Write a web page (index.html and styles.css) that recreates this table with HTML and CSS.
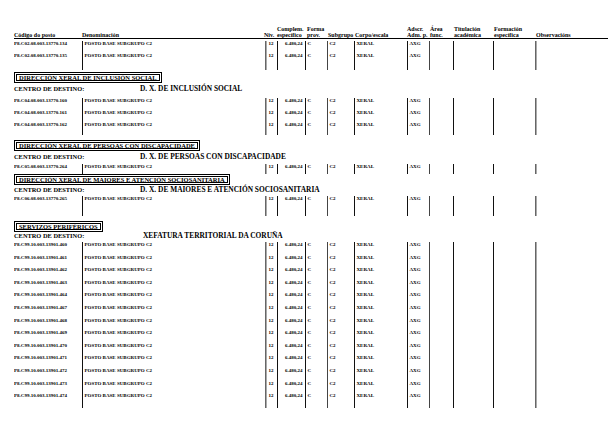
FILE: index.html
```html
<!DOCTYPE html>
<html lang="gl">
<head>
<meta charset="utf-8">
<title>Relación de postos</title>
<link rel="stylesheet" href="styles.css">
</head>
<body>
<div class="page">
  <div class="head">
    <div class="h h-code">Código do posto</div>
    <div class="h h-den">Denominación</div>
    <div class="h h-niv">Niv.</div>
    <div class="h h-comp">Complem.<br>específico</div>
    <div class="h h-forma">Forma<br>prov.</div>
    <div class="h">Subgrupo</div>
    <div class="h">Corpo/escala</div>
    <div class="h h-ads">Adscr.<br>Adm. p.</div>
    <div class="h">Área<br>func.</div>
    <div class="h">Titulación<br>académica</div>
    <div class="h">Formación<br>específica</div>
    <div class="h">Observacións</div>
  </div>

  <table class="rows mt2">
    <colgroup><col class="c1"><col class="c2"><col class="c3"><col class="c4"><col class="c5"><col class="c6"><col class="c7"><col class="c8"><col class="c9"><col class="c10"><col class="c11"><col class="c12"></colgroup>
    <tr><td>P8.C02.08.003.13770.134</td><td>POSTO BASE SUBGRUPO C2</td><td class="n">12</td><td class="r">6.480,24</td><td>C</td><td>C2</td><td>XERAL</td><td>AXG</td><td></td><td></td><td></td><td></td></tr>
    <tr><td>P8.C02.08.003.13770.135</td><td>POSTO BASE SUBGRUPO C2</td><td class="n">12</td><td class="r">6.480,24</td><td>C</td><td>C2</td><td>XERAL</td><td>AXG</td><td></td><td></td><td></td><td></td></tr>
    <tr class="tail t5"><td></td><td></td><td></td><td></td><td></td><td></td><td></td><td></td><td></td><td></td><td></td><td></td></tr>
  </table>

  <div class="sec s2"><span class="box">DIRECCIÓN XERAL DE INCLUSIÓN SOCIAL</span></div>
  <div class="centro m2"><span class="cl">CENTRO DE DESTINO:</span><span class="cn">D. X. DE INCLUSIÓN SOCIAL</span></div>
  <table class="rows mt5">
    <colgroup><col class="c1"><col class="c2"><col class="c3"><col class="c4"><col class="c5"><col class="c6"><col class="c7"><col class="c8"><col class="c9"><col class="c10"><col class="c11"><col class="c12"></colgroup>
    <tr><td>P8.C04.08.003.13770.160</td><td>POSTO BASE SUBGRUPO C2</td><td class="n">12</td><td class="r">6.480,24</td><td>C</td><td>C2</td><td>XERAL</td><td>AXG</td><td></td><td></td><td></td><td></td></tr>
    <tr><td>P8.C04.08.003.13770.161</td><td>POSTO BASE SUBGRUPO C2</td><td class="n">12</td><td class="r">6.480,24</td><td>C</td><td>C2</td><td>XERAL</td><td>AXG</td><td></td><td></td><td></td><td></td></tr>
    <tr><td>P8.C04.08.003.13770.162</td><td>POSTO BASE SUBGRUPO C2</td><td class="n">12</td><td class="r">6.480,24</td><td>C</td><td>C2</td><td>XERAL</td><td>AXG</td><td></td><td></td><td></td><td></td></tr>
    <tr class="tail t1"><td></td><td></td><td></td><td></td><td></td><td></td><td></td><td></td><td></td><td></td><td></td><td></td></tr>
  </table>

  <div class="sec s5"><span class="box">DIRECCIÓN XERAL DE PERSOAS CON DISCAPACIDADE</span></div>
  <div class="centro m2"><span class="cl">CENTRO DE DESTINO:</span><span class="cn">D. X. DE PERSOAS CON DISCAPACIDADE</span></div>
  <table class="rows mt3 short">
    <colgroup><col class="c1"><col class="c2"><col class="c3"><col class="c4"><col class="c5"><col class="c6"><col class="c7"><col class="c8"><col class="c9"><col class="c10"><col class="c11"><col class="c12"></colgroup>
    <tr><td>P8.C05.08.003.13770.264</td><td>POSTO BASE SUBGRUPO C2</td><td class="n">12</td><td class="r">6.480,24</td><td>C</td><td>C2</td><td>XERAL</td><td>AXG</td><td></td><td></td><td></td><td></td></tr>
  </table>

  <div class="sec s0"><span class="box">DIRECCIÓN XERAL DE MAIORES E ATENCIÓN SOCIOSANITARIA</span></div>
  <div class="centro m1"><span class="cl">CENTRO DE DESTINO:</span><span class="cn">D. X. DE MAIORES E ATENCIÓN SOCIOSANITARIA</span></div>
  <table class="rows mt2">
    <colgroup><col class="c1"><col class="c2"><col class="c3"><col class="c4"><col class="c5"><col class="c6"><col class="c7"><col class="c8"><col class="c9"><col class="c10"><col class="c11"><col class="c12"></colgroup>
    <tr><td>P8.C06.08.003.13770.265</td><td>POSTO BASE SUBGRUPO C2</td><td class="n">12</td><td class="r">6.480,24</td><td>C</td><td>C2</td><td>XERAL</td><td>AXG</td><td></td><td></td><td></td><td></td></tr>
    <tr class="tail t8"><td></td><td></td><td></td><td></td><td></td><td></td><td></td><td></td><td></td><td></td><td></td><td></td></tr>
  </table>

  <div class="sec s5"><span class="box">SERVIZOS PERIFÉRICOS</span></div>
  <div class="centro m0"><span class="cl">CENTRO DE DESTINO:</span><span class="cn cn-x">XEFATURA TERRITORIAL DA CORUÑA</span></div>
  <table class="rows mt2 wide">
    <colgroup><col class="c1"><col class="c2"><col class="c3"><col class="c4"><col class="c5"><col class="c6"><col class="c7"><col class="c8"><col class="c9"><col class="c10"><col class="c11"><col class="c12"></colgroup>
    <tr><td>P8.C99.10.003.13901.460</td><td>POSTO BASE SUBGRUPO C2</td><td class="n">12</td><td class="r">6.480,24</td><td>C</td><td>C2</td><td>XERAL</td><td>AXG</td><td></td><td></td><td></td><td></td></tr>
    <tr><td>P8.C99.10.003.13901.461</td><td>POSTO BASE SUBGRUPO C2</td><td class="n">12</td><td class="r">6.480,24</td><td>C</td><td>C2</td><td>XERAL</td><td>AXG</td><td></td><td></td><td></td><td></td></tr>
    <tr><td>P8.C99.10.003.13901.462</td><td>POSTO BASE SUBGRUPO C2</td><td class="n">12</td><td class="r">6.480,24</td><td>C</td><td>C2</td><td>XERAL</td><td>AXG</td><td></td><td></td><td></td><td></td></tr>
    <tr><td>P8.C99.10.003.13901.463</td><td>POSTO BASE SUBGRUPO C2</td><td class="n">12</td><td class="r">6.480,24</td><td>C</td><td>C2</td><td>XERAL</td><td>AXG</td><td></td><td></td><td></td><td></td></tr>
    <tr><td>P8.C99.10.003.13901.464</td><td>POSTO BASE SUBGRUPO C2</td><td class="n">12</td><td class="r">6.480,24</td><td>C</td><td>C2</td><td>XERAL</td><td>AXG</td><td></td><td></td><td></td><td></td></tr>
    <tr><td>P8.C99.10.003.13901.467</td><td>POSTO BASE SUBGRUPO C2</td><td class="n">12</td><td class="r">6.480,24</td><td>C</td><td>C2</td><td>XERAL</td><td>AXG</td><td></td><td></td><td></td><td></td></tr>
    <tr><td>P8.C99.10.003.13901.468</td><td>POSTO BASE SUBGRUPO C2</td><td class="n">12</td><td class="r">6.480,24</td><td>C</td><td>C2</td><td>XERAL</td><td>AXG</td><td></td><td></td><td></td><td></td></tr>
    <tr><td>P8.C99.10.003.13901.469</td><td>POSTO BASE SUBGRUPO C2</td><td class="n">12</td><td class="r">6.480,24</td><td>C</td><td>C2</td><td>XERAL</td><td>AXG</td><td></td><td></td><td></td><td></td></tr>
    <tr><td>P8.C99.10.003.13901.470</td><td>POSTO BASE SUBGRUPO C2</td><td class="n">12</td><td class="r">6.480,24</td><td>C</td><td>C2</td><td>XERAL</td><td>AXG</td><td></td><td></td><td></td><td></td></tr>
    <tr><td>P8.C99.10.003.13901.471</td><td>POSTO BASE SUBGRUPO C2</td><td class="n">12</td><td class="r">6.480,24</td><td>C</td><td>C2</td><td>XERAL</td><td>AXG</td><td></td><td></td><td></td><td></td></tr>
    <tr><td>P8.C99.10.003.13901.472</td><td>POSTO BASE SUBGRUPO C2</td><td class="n">12</td><td class="r">6.480,24</td><td>C</td><td>C2</td><td>XERAL</td><td>AXG</td><td></td><td></td><td></td><td></td></tr>
    <tr><td>P8.C99.10.003.13901.473</td><td>POSTO BASE SUBGRUPO C2</td><td class="n">12</td><td class="r">6.480,24</td><td>C</td><td>C2</td><td>XERAL</td><td>AXG</td><td></td><td></td><td></td><td></td></tr>
    <tr><td>P8.C99.10.003.13901.474</td><td>POSTO BASE SUBGRUPO C2</td><td class="n">12</td><td class="r">6.480,24</td><td>C</td><td>C2</td><td>XERAL</td><td>AXG</td><td></td><td></td><td></td><td></td></tr>
    <tr class="tail t2"><td></td><td></td><td></td><td></td><td></td><td></td><td></td><td></td><td></td><td></td><td></td><td></td></tr>
  </table>
</div>
</body>
</html>
```
FILE: styles.css
```css
html, body {
  margin: 0;
  padding: 0;
  background: #fff;
}
body {
  font-family: "Liberation Serif", "Times New Roman", serif;
  font-weight: bold;
  color: #000;
}
.page {
  padding: 27px 7px 0 14px;
}
.head {
  display: grid;
  grid-template-columns: 68px 182px 13px 29px 22px 27px 52px 23px 24px 40px 42px 72px;
  align-items: end;
  height: 11px;
  border-bottom: 1px solid #000;
  font-size: 6px;
  line-height: 5.5px;
  white-space: nowrap;
}
.h-forma { padding-left: 1px; }

/* data tables */
.rows {
  border-collapse: collapse;
  border-spacing: 0;
  table-layout: fixed;
  width: 586px;
  font-size: 5px;
  line-height: 6px;
}
.rows.mt2 { margin-top: 2px; }
.rows.mt3 { margin-top: 3px; }
.rows.mt5 { margin-top: 5px; }
.c1 { width: 68px; }
.c2 { width: 183px; }
.c3 { width: 12px; }
.c4 { width: 28px; }
.c5 { width: 22px; }
.c6 { width: 27px; }
.c7 { width: 53px; }
.c8 { width: 22px; }
.c9 { width: 24px; }
.c10 { width: 40px; }
.c11 { width: 42px; }
.c12 { width: 65px; }
.rows td {
  height: 12px;
  padding: 0 0 0 2px;
  vertical-align: top;
  white-space: nowrap;
  overflow: hidden;
  border-left: 1px solid #111;
  box-sizing: border-box;
}
.rows td:first-child {
  border-left: none;
  padding-left: 0;
}
.rows td:nth-child(3),
.rows td:nth-child(12) {
  border-left: 1px solid #666;
  box-shadow: inset 1px 0 0 #aaa;
}
.rows td:nth-child(6),
.rows td:nth-child(9) {
  border-left-color: #444;
}
.rows td.n {
  text-align: center;
  padding-left: 0;
}
.rows td.r {
  text-align: right;
  padding-right: 2px;
}
.rows.short td { height: 10px; }
.rows.wide td { height: 12.6px; }
.rows tr.tail.t1 td { height: 1px; }
.rows tr.tail.t2 td { height: 2px; }
.rows tr.tail.t5 td { height: 5px; }
.rows tr.tail.t8 td { height: 8px; }

/* section boxes */
.sec {
  display: flex;
  height: 11px;
}
.sec.s0 { margin-top: 0; }
.sec.s2 { margin-top: 2px; }
.sec.s5 { margin-top: 5px; }
.box {
  display: block;
  box-sizing: border-box;
  height: 11px;
  border: 3px double #000;
  padding: 0 2px;
  font-size: 6.5px;
  line-height: 5px;
  white-space: nowrap;
}

/* centro de destino */
.centro {
  display: flex;
  align-items: center;
  height: 8px;
  white-space: nowrap;
}
.centro.m0 { margin-top: 0; }
.centro.m1 { margin-top: 1px; }
.centro.m2 { margin-top: 2px; }
.cl {
  display: block;
  width: 126px;
  font-size: 6.4px;
  line-height: 8px;
}
.cn {
  display: block;
  font-size: 7.4px;
  line-height: 8px;
}
.cn-x { padding-left: 3px; }
```
